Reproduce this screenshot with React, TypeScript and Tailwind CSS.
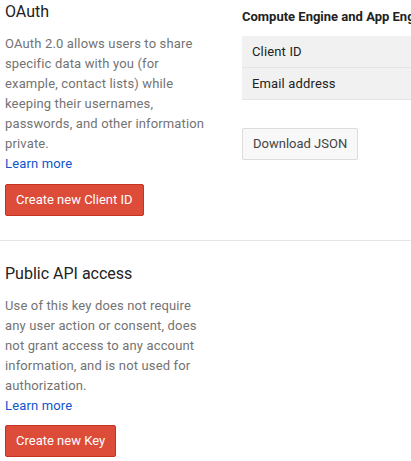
export default function App() {
    return (
        <div className="w-[411px] h-[461px] overflow-hidden bg-white font-['Roboto',sans-serif]">
            {/* OAuth */}
            <div className="flex border-b border-[#e5e5e5] pb-[24px]">
                <div className="w-[242px] shrink-0 pl-[5px] pr-[31px]">
                    <h2 className="text-[16px] leading-[24px] text-[#222]">OAuth</h2>
                    <p className="mt-[10px] text-[13px] leading-[20px] tracking-[0.15px] text-[#737373]">
                        OAuth 2.0 allows users to share specific data with you (for example, contact lists) while keeping
                        their usernames, passwords, and other information private.
                    </p>
                    <a className="block text-[13px] leading-[20px] tracking-[0.15px] text-[#1155cc]">Learn more</a>
                    <button className="mt-[10px] h-[32px] rounded-[2px] border border-[#c23321] bg-[#dd4b39] px-[10px] text-[13px] text-white">
                        Create new Client ID
                    </button>
                </div>
                <div className="min-w-0 flex-1 overflow-hidden pt-[7px]">
                    <h3 className="whitespace-nowrap text-[13px] font-bold leading-[20px] text-[#222]">
                        Compute Engine and App Engine
                    </h3>
                    <div className="mt-[9px] w-[200px] bg-[#f1f1f1] text-[13px] tracking-[0.15px] text-[#222]">
                        <div className="flex h-[32px] items-center border-b border-[#e5e5e5] px-[10px]">Client ID</div>
                        <div className="flex h-[32px] items-center border-b border-[#e5e5e5] px-[10px]">Email address</div>
                    </div>
                    <button className="mt-[28px] h-[32px] rounded-[2px] border border-[#dcdcdc] bg-[#f8f8f8] px-[10px] text-[13px] text-[#444]">
                        Download JSON
                    </button>
                </div>
            </div>

            {/* Public API access */}
            <div className="w-[242px] pl-[5px] pr-[31px] pt-[21px]">
                <h2 className="text-[16px] leading-[24px] text-[#222]">Public API access</h2>
                <p className="mt-[10px] text-[13px] leading-[20px] tracking-[0.15px] text-[#737373]">
                    Use of this key does not require any user action or consent, does not grant access to any account
                    information, and is not used for authorization.
                </p>
                <a className="block text-[13px] leading-[20px] tracking-[0.15px] text-[#1155cc]">Learn more</a>
                <button className="mt-[9px] h-[32px] rounded-[2px] border border-[#c23321] bg-[#dd4b39] px-[10px] text-[13px] text-white">
                    Create new Key
                </button>
            </div>
        </div>
    );
}
